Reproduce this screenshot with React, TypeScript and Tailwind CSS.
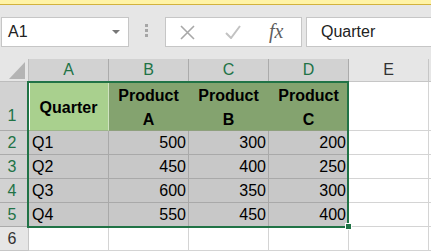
import React from "react";

const colHdr = ["A", "B", "C", "D"];
const data = [
  ["Q1", "500", "300", "200"],
  ["Q2", "450", "400", "250"],
  ["Q3", "600", "350", "300"],
  ["Q4", "550", "450", "400"],
];

export default function App() {
  return (
    <div className="relative w-[431px] h-[251px] overflow-hidden bg-white font-['Liberation_Sans',Arial,sans-serif]">
      <div className="h-[4px] bg-[#fff3a6]" />
      <div className="h-[1px] bg-[#d2b23e]" />
      {/* toolbar */}
      <div className="h-[54px] bg-[#e6e6e6] flex items-start pt-[12px]">
        <div className="relative ml-[1px] w-[128px] h-[30px] border border-[#c6c6c6] bg-white flex items-center pl-[6px] text-[16px] text-[#222]">
          A1
          <svg className="absolute left-[110px] top-[12px]" width="8" height="4" viewBox="0 0 8 4">
            <polygon points="0,0 8,0 4,4" fill="#777" />
          </svg>
        </div>
        <div className="ml-[16px] mt-[7px] flex flex-col gap-[2px]">
          <div className="w-[3px] h-[3px] bg-[#a6a6a6]" />
          <div className="w-[3px] h-[3px] bg-[#a6a6a6]" />
          <div className="w-[3px] h-[3px] bg-[#a6a6a6]" />
        </div>
        <div className="ml-[17px] w-[137px] h-[30px] border border-[#c6c6c6] bg-white flex items-center pl-[14px]">
          <svg width="15" height="15" viewBox="0 0 15 15">
            <path d="M1 1 L14 14 M14 1 L1 14" stroke="#a8a8a8" strokeWidth="1.6" fill="none" />
          </svg>
          <svg className="ml-[30px]" width="16" height="14" viewBox="0 0 16 14">
            <path d="M1 8 L6 13 L15 1" stroke="#c2c2c2" strokeWidth="2" fill="none" />
          </svg>
          <span className="ml-[28px] font-['Liberation_Serif',serif] italic text-[20px] text-[#5f5f5f] leading-none -mt-[2px]">
            fx
          </span>
        </div>
        <div className="ml-[4px] flex-1 h-[30px] border border-[#c6c6c6] border-r-0 bg-white flex items-center pl-[14px] text-[16px] text-[#222]">
          Quarter
        </div>
      </div>
      {/* grid */}
      <div className="grid grid-cols-[29px_80px_80px_80px_80px_80px_1fr] grid-rows-[23px_49px_24px_24px_24px_24px_24px_1fr] text-[16px]">
        {/* header row */}
        <div className="relative bg-[#e6e6e6] border-r border-b border-[#bdbdbd]">
          <svg className="absolute left-[9px] top-[3px]" width="17" height="17" viewBox="0 0 17 17">
            <polygon points="16,0 16,17 0,17" fill="#b4b4b4" />
          </svg>
        </div>
        {colHdr.map((c) => (
          <div key={c} className="bg-[#d2d2d2] border-r border-b border-[#ababab] flex items-center justify-center text-[16px] text-[#217346]">
            {c}
          </div>
        ))}
        <div className="bg-[#e6e6e6] border-r border-b border-[#c6c6c6] flex items-center justify-center text-[16px] text-[#333]">
          E
        </div>
        <div className="bg-[#e6e6e6] border-b border-[#c6c6c6]" />

        {/* row 1 */}
        <div className="bg-[#d2d2d2] border-r border-b border-[#ababab] flex items-end justify-center pr-[4px] pb-[2px] text-[16px] text-[#217346]">
          1
        </div>
        <div className="bg-[#a9d08e] border-r border-b border-r-[#cfe2c0] border-b-[#9db58a] shadow-[inset_1px_1px_0_#fff] flex items-center justify-center pt-[4px] font-bold text-black">
          Quarter
        </div>
        {["A", "B", "C"].map((l) => (
          <div key={l} className="bg-[#84a36f] border-b border-b-[#8fa07e] border-r border-r-[#84a36f] flex flex-col items-center justify-center pt-[4px] font-bold text-black leading-[24px]">
            <span>Product</span>
            <span>{l}</span>
          </div>
        ))}
        <div className="border-r border-b border-[#d4d4d4]" />
        <div className="border-b border-[#d4d4d4]" />

        {/* data rows */}
        {data.map((row, ri) => (
          <React.Fragment key={ri}>
            <div className="bg-[#d2d2d2] border-r border-b border-[#ababab] flex items-center justify-center pr-[4px] text-[16px] text-[#217346]">
              {ri + 2}
            </div>
            {row.map((v, ci) => (
              <div
                key={ci}
                className={`bg-[#c8c8c8] border-r border-b border-[#a9a9a9] flex items-center text-black ${ci === 0 ? "justify-start pl-[3px]" : "justify-end pr-[2px]"}`}
              >
                {v}
              </div>
            ))}
            <div className="border-r border-b border-[#d4d4d4]" />
            <div className="border-b border-[#d4d4d4]" />
          </React.Fragment>
        ))}

        {/* row 6 */}
        <div className="bg-[#e6e6e6] border-r border-b border-[#c6c6c6] flex items-center justify-center pr-[4px] text-[16px] text-[#333]">
          6
        </div>
        {[0, 1, 2, 3, 4].map((i) => (
          <div key={i} className="border-r border-b border-[#d4d4d4]" />
        ))}
        <div className="border-b border-[#d4d4d4]" />
      </div>

      {/* selection overlay */}
      <div className="absolute left-[27px] top-[81px] w-[322px] h-[147px] border-2 border-[#217346] pointer-events-none" />
      <div className="absolute left-[345px] top-[223px] w-[7px] h-[7px] bg-[#217346] border border-white pointer-events-none" />
    </div>
  );
}
